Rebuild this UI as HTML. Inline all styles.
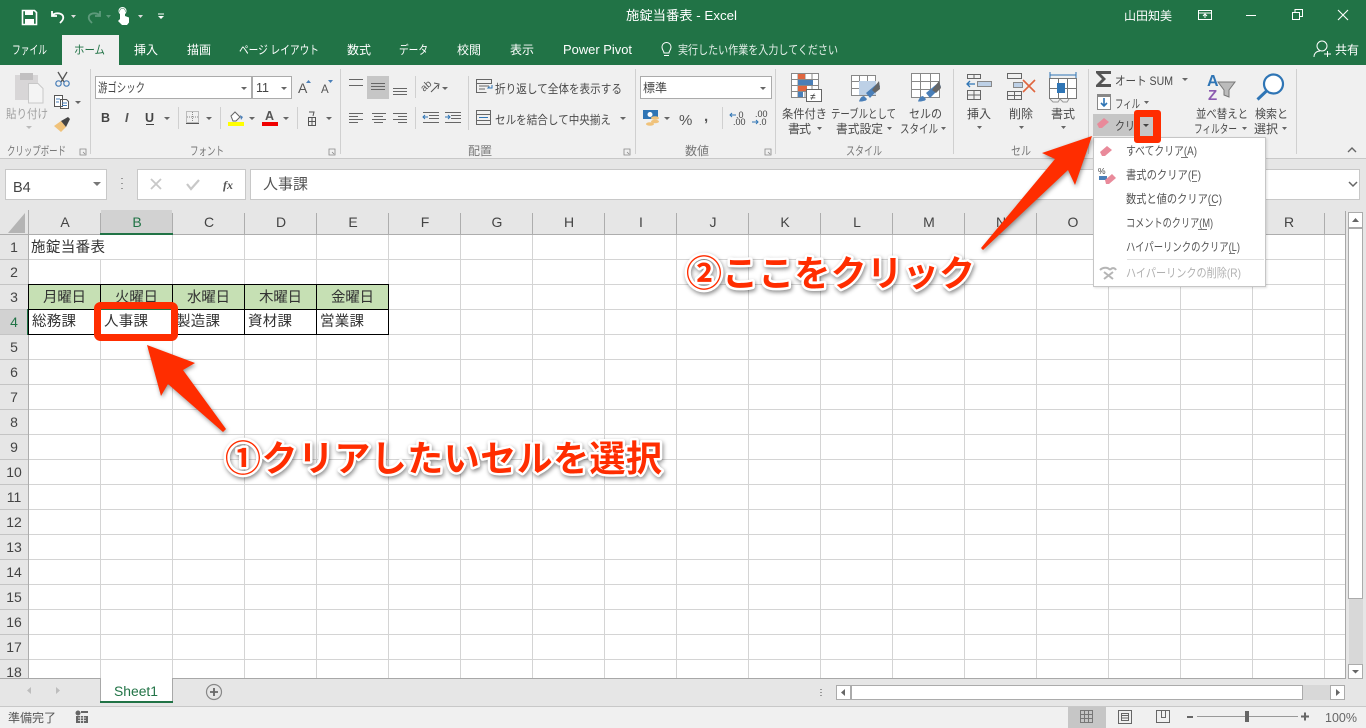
<!DOCTYPE html>
<html lang="ja"><head><meta charset="utf-8"><title>施錠当番表 - Excel</title>
<style>
html,body{margin:0;padding:0;background:#fff;overflow:hidden;width:1366px;height:728px}
svg{display:block}
text{font-family:"Liberation Sans","Noto Sans CJK JP",sans-serif;fill:#4a4a4a;font-size:12px}
.g{fill:#777;font-size:12px}
.h{font-size:14px;fill:#444;text-anchor:middle}
.c{font-size:14.5px;fill:#333}
.m{font-size:12px;fill:#555}
.t{font-size:12px;fill:#fff}
.a{font-weight:700;font-size:36px;fill:#ff2d00;stroke:#fff;stroke-width:5px;paint-order:stroke;stroke-linejoin:round;filter:drop-shadow(1px 2px 2px rgba(0,0,0,.45))}
.ar{fill:#ff2d00;filter:drop-shadow(1px 2px 2px rgba(0,0,0,.4))}
.tri{fill:#666}
</style></head><body>
<svg width="1366" height="728" viewBox="0 0 1366 728" xmlns="http://www.w3.org/2000/svg">
<defs>
<pattern id="grid" x="29" y="235" width="72" height="25" patternUnits="userSpaceOnUse">
<rect x="71" width="1" height="25" fill="#d4d4d4"/><rect y="24" width="72" height="1" fill="#d4d4d4"/>
</pattern>
<pattern id="hd" x="29" y="210" width="72" height="25" patternUnits="userSpaceOnUse">
<rect x="71" y="3" width="1" height="22" fill="#adadad"/>
</pattern>
<pattern id="rh" x="0" y="235" width="28" height="25" patternUnits="userSpaceOnUse">
<rect y="24" width="28" height="1" fill="#c4c4c4"/>
</pattern>
</defs>

<!-- title bar -->
<rect width="1366" height="65" fill="#217346"/>
<path d="M22.500 10.500h12l2 2v12h-14z" fill="none" stroke="#fff" stroke-width="1.600"/><rect x="25" y="10" width="8" height="5" fill="#fff"/><rect x="25" y="19" width="9" height="5" fill="#fff"/>
<path d="M52 11v5h5M52 15.500c3-3 9-3 11 .5 1 3-1 5-3 7" fill="none" stroke="#fff" stroke-width="1.800"/>
<path d="M71 15l5 0-2.500 3z" fill="#ddd"/>
<path d="M100 11v5h-5M100 15.500c-3-3-9-3-11 .5-1 3 1 5 3 7" fill="none" stroke="#5d9a7b" stroke-width="1.800"/>
<path d="M106 15l5 0-2.500 3z" fill="#5d9a7b"/>
<path d="M120 19v-8a2.500 2.500 0 0 1 5 0v5l4 1.500v5l-2 2.500h-5l-4-4z" fill="#fff"/><circle cx="122.500" cy="11" r="3.500" fill="none" stroke="#fff"/>
<path d="M138 15h5l-2.500 3z" fill="#ddd"/>
<path d="M158 13.500h6v1h-6zM158 16h6l-3 3z" fill="#fff"/>
<text x="626" y="20" class="t" style="font-size:13px" textLength="111" lengthAdjust="spacingAndGlyphs">施錠当番表 - Excel</text>
<text x="1124" y="20" class="t" textLength="48">山田知美</text>
<path d="M1198.500 10.500h13v9h-13zM1198.500 13h13M1205 18v-4M1203 16l2-2 2 2" stroke="#fff" fill="none"/>
<rect x="1246" y="15" width="10" height="1" fill="#fff"/>
<path d="M1292.500 12.500h7v7h-7zM1295 12v-2.500h7.500v7H1300" fill="none" stroke="#fff"/>
<path d="M1338 10l10 10M1348 10l-10 10" stroke="#fff" fill="none" stroke-width="1.100"/>

<!-- tabs -->
<rect x="62" y="35" width="57" height="30" fill="#f0f0f0"/>
<text x="12" y="54" class="t" textLength="35" lengthAdjust="spacingAndGlyphs">ファイル</text>
<text x="74" y="54" style="fill:#217346" textLength="31" lengthAdjust="spacingAndGlyphs">ホーム</text>
<text x="134" y="54" class="t">挿入</text>
<text x="187" y="54" class="t">描画</text>
<text x="239" y="54" class="t" textLength="80" lengthAdjust="spacingAndGlyphs">ページ レイアウト</text>
<text x="347" y="54" class="t">数式</text>
<text x="399" y="54" class="t" textLength="29" lengthAdjust="spacingAndGlyphs">データ</text>
<text x="457" y="54" class="t">校閲</text>
<text x="510" y="54" class="t">表示</text>
<text x="563" y="54" class="t" style="font-size:13px" textLength="69" lengthAdjust="spacingAndGlyphs">Power Pivot</text>
<path d="M664 53c0-2-2-3-2-6a4.500 4.500 0 0 1 9 0c0 3-2 4-2 6zM664 55.500h5" fill="none" stroke="#fff"/>
<text x="678" y="54" class="t" style="fill:#e4efe9" textLength="160" lengthAdjust="spacingAndGlyphs">実行したい作業を入力してください</text>
<circle cx="1322" cy="46" r="5" fill="none" stroke="#fff"/><path d="M1314 57c0-4 3-6 6-6M1324 54h7M1327.500 51v6" fill="none" stroke="#fff"/>
<text x="1335" y="54" class="t">共有</text>

<!-- ribbon -->
<rect y="65" width="1366" height="93" fill="#f0f0f0"/>
<rect x="0" y="158" width="1366" height="1" fill="#c8c8c8"/>
<rect y="159" width="1366" height="51" fill="#e6e6e6"/>
<g fill="#d0d0d0"><rect x="90" y="69" width="1" height="85"/><rect x="340" y="69" width="1" height="85"/><rect x="635" y="69" width="1" height="85"/><rect x="775" y="69" width="1" height="85"/><rect x="953" y="69" width="1" height="85"/><rect x="1088" y="69" width="1" height="85"/><rect x="1296" y="69" width="1" height="85"/>
<rect x="178" y="107" width="1" height="22"/><rect x="220" y="107" width="1" height="22"/><rect x="297" y="107" width="1" height="22"/><rect x="415" y="76" width="1" height="22"/><rect x="415" y="107" width="1" height="22"/><rect x="468" y="76" width="1" height="54"/><rect x="722" y="107" width="1" height="22"/></g>

<!-- clipboard -->
<path d="M15 75h23v25H15z" fill="#d8d6d7"/><rect x="20" y="73" width="13" height="7" fill="#c2c0c1"/>
<path d="M28.500 83.500h9.500l5 5v14.500H28.500z" fill="#f4f4f4" stroke="#c8c8c8"/>
<text x="6" y="118" style="fill:#a0a0a0" textLength="42" lengthAdjust="spacingAndGlyphs">貼り付け</text>
<path d="M26 126h6l-3 3z" fill="#bbb"/>
<path d="M58 72l6 10M67 72l-6 10" stroke="#555" fill="none" stroke-width="1.300"/><circle cx="58.500" cy="83.500" r="2.700" fill="none" stroke="#4a7fb8" stroke-width="1.200"/><circle cx="66.500" cy="83.500" r="2.700" fill="none" stroke="#4a7fb8" stroke-width="1.200"/>
<path d="M54.500 95.500h8v11h-8zM60.500 99.500h6l2 2v7h-8z" fill="#fff" stroke="#555"/><path d="M56 99h4M56 102h3M62 103h5M62 105.500h5" stroke="#4a7fb8"/>
<path d="M75 101h6l-3 3z" class="tri"/>
<path d="M54 126l7-5 5 6-5 5z" fill="#f0c27a"/><path d="M61 121l7-4 2 2-4 8z" fill="#444"/>
<text x="7" y="155" class="g" textLength="59" lengthAdjust="spacingAndGlyphs">クリップボード</text>
<path d="M80 149h6v6h-6zM83 152l2 2" fill="none" stroke="#888" stroke-width=".8"/>

<!-- font group -->
<rect x="95.500" y="76.500" width="156" height="22" fill="#fff" stroke="#ababab"/>
<rect x="252.500" y="76.500" width="39" height="22" fill="#fff" stroke="#ababab"/>
<text x="98" y="92" style="font-size:12.500px;fill:#444" textLength="47" lengthAdjust="spacingAndGlyphs">游ゴシック</text>
<text x="256" y="92" style="font-size:12.500px;fill:#444">11</text>
<path d="M241 87h6l-3 3zM281 87h6l-3 3z" class="tri"/>
<text x="298" y="93" style="font-size:14px;fill:#555">A</text><path d="M306 83l2.500-3 2.500 3z" fill="#4a7fb8"/>
<text x="321" y="93" style="font-size:11.500px;fill:#555">A</text><path d="M328 80h5l-2.500 3z" fill="#4a7fb8"/>
<text x="101" y="122" style="font-size:12.500px;font-weight:700;fill:#444">B</text>
<text x="125" y="122" style="font-size:12.500px;font-style:italic;font-weight:700;fill:#555">I</text>
<text x="145" y="122" style="font-size:12.500px;font-weight:700;fill:#444">U</text><rect x="146" y="124" width="8" height="1" fill="#444"/>
<path d="M164 117h6l-3 3zM206 117h6l-3 3zM249 117h6l-3 3zM283 117h6l-3 3zM326 117h6l-3 3z" class="tri"/>
<rect x="186.500" y="111.500" width="12" height="11" fill="none" stroke="#888" stroke-dasharray="1 1"/><path d="M192.500 112v10M187 117h11" stroke="#888" stroke-dasharray="1 1"/><rect x="186" y="123" width="13" height="1" fill="#555"/>
<path d="M231 116l4-4 5 5-4 4h-3z" fill="#fff" stroke="#666"/><path d="M240 115l3 2-2 3z" fill="#4a7fb8"/><rect x="228" y="122" width="16" height="4" fill="#ffff00"/>
<text x="265" y="120" style="font-size:12.500px;font-weight:700;fill:#555">A</text><rect x="262" y="122" width="16" height="4" fill="#f00000"/>
<path d="M309 112h5l-1 4M308.500 117.500h7v8h-7zM312 117.500v8M308.500 121.500h7" fill="none" stroke="#555"/>
<text x="190" y="155" class="g" textLength="34" lengthAdjust="spacingAndGlyphs">フォント</text>
<path d="M329 149h6v6h-6zM332 152l2 2" fill="none" stroke="#888" stroke-width=".8"/>

<!-- alignment -->
<rect x="367" y="76" width="22" height="23" fill="#c6c6c6"/>
<path d="M349 79.500h14M349 85.500h14M371 83.500h14M371 86.500h14M371 89.500h14M393 88.500h14M393 91.500h14M393 94.500h14M349 113.500h14M349 116.500h9M349 119.500h14M349 122.500h9M372 113.500h14M374 116.500h9M372 119.500h14M374 122.500h9M393 113.500h14M398 116.500h9M393 119.500h14M398 122.500h9" stroke="#666" fill="none"/>
<text x="424" y="92" transform="rotate(-42 424 92)" style="font-size:10px;fill:#555">ab</text><path d="M431 92l7-7M434 83l5 1-1 5" stroke="#555" fill="none"/><path d="M442 87h6l-3 3z" class="tri"/>
<path d="M423 112.500h16M429 115.500h10M429 118.500h10M423 122.500h16M445 112.500h16M451 115.500h10M451 118.500h10M445 122.500h16" stroke="#666"/>
<path d="M423 117h5M425 115l-2 2 2 2" stroke="#2f75b5" fill="none"/><path d="M445 117h5M448 115l2 2-2 2" stroke="#2f75b5" fill="none"/>
<path d="M476.500 79.500h15v4h-15zM476.500 83.500v9h10M479 86h10M479 89h6" stroke="#666" fill="none"/><path d="M492 85v3h-4l1.500-1.500" stroke="#2f75b5" fill="none"/>
<text x="495" y="93" textLength="127" lengthAdjust="spacingAndGlyphs">折り返して全体を表示する</text>
<path d="M476.500 110.500h14v14h-14zM476.500 114.500h14M476.500 120.500h14" stroke="#666" fill="none"/><path d="M479 117.500h9" stroke="#2f75b5"/>
<text x="495" y="124" textLength="116" lengthAdjust="spacingAndGlyphs">セルを結合して中央揃え</text>
<path d="M620 117h6l-3 3z" class="tri"/>
<text x="468" y="155" class="g" textLength="24">配置</text>
<path d="M624 149h6v6h-6zM627 152l2 2" fill="none" stroke="#888" stroke-width=".8"/>

<!-- number -->
<rect x="640.500" y="76.500" width="131" height="22" fill="#fff" stroke="#ababab"/>
<text x="643" y="92" style="fill:#444">標準</text>
<path d="M760 87h6l-3 3z" class="tri"/>
<rect x="643" y="110" width="15" height="9" fill="#2f75b5"/><circle cx="650" cy="114.500" r="2.500" fill="#fff"/><ellipse cx="655" cy="118" rx="4" ry="1.800" fill="#f0c27a"/><ellipse cx="655" cy="121.500" rx="4" ry="1.800" fill="#f0c27a"/><ellipse cx="650" cy="124" rx="4" ry="1.800" fill="#f0c27a"/>
<path d="M664 117h6l-3 3z" class="tri"/>
<text x="679" y="125" style="font-size:15px;fill:#555">%</text>
<text x="704" y="121" style="font-size:15px;font-weight:700;fill:#555">,</text>
<text x="736" y="118" style="font-size:9px;fill:#444">.0</text><text x="733" y="125" style="font-size:9px;fill:#444">.00</text><path d="M730 115h6M732 113l-2 2 2 2" stroke="#2f75b5" fill="none"/>
<text x="755" y="117" style="font-size:9px;fill:#444">.00</text><text x="759" y="125" style="font-size:9px;fill:#444">.0</text><path d="M752 122h6M756 120l2 2-2 2" stroke="#2f75b5" fill="none"/>
<text x="685" y="155" class="g" textLength="24">数値</text>
<path d="M765 149h6v6h-6zM768 152l2 2" fill="none" stroke="#888" stroke-width=".8"/>

<!-- styles -->
<path d="M791.500 73.500h27v24h-27zM791.500 79.500h27M791.500 85.500h27M791.500 91.500h27M798 73.500v24M805 73.500v24M812 73.500v24" stroke="#888" fill="#fff"/>
<rect x="798" y="74" width="7" height="5" fill="#e0663f"/><rect x="798" y="80" width="15" height="5" fill="#4a7fb8"/><rect x="798" y="86" width="9" height="5" fill="#e0663f"/><rect x="798" y="92" width="5" height="5" fill="#4a7fb8"/>
<rect x="806.500" y="89.500" width="15" height="12" fill="#fff" stroke="#666"/><text x="810" y="100" style="font-size:10px;fill:#333">≠</text>
<text x="782" y="118" textLength="45" lengthAdjust="spacingAndGlyphs">条件付き</text>
<text x="788" y="133" textLength="23">書式</text><path d="M817 127h5l-2.500 3z" class="tri"/>
<path d="M851.500 75.500h24v20h-24zM851.500 81.500h24M851.500 88.500h24M859.500 75.500v20M867.500 75.500v20" stroke="#888" fill="#fff"/><rect x="859" y="81" width="17" height="14" fill="#bdd0e6"/>
<path d="M864 96l3 3-1 1.500-4 1h-3c1-3 2-5 5-5.500zM866 93l13-11 1 5-10 11z" fill="#4a7fb8"/><path d="M872 90l7-9 1 8-5 4z" fill="#666"/>
<text x="831" y="118" textLength="65" lengthAdjust="spacingAndGlyphs">テーブルとして</text>
<text x="836" y="133" textLength="47" lengthAdjust="spacingAndGlyphs">書式設定</text><path d="M887 127h5l-2.500 3z" class="tri"/>
<path d="M911.500 73.500h28v24h-28zM911.500 81.500h28M911.500 89.500h28M920.500 73.500v24M930.500 73.500v24" stroke="#888" fill="#fff"/>
<path d="M923 96l3 3-1 1.500-4 1h-3c1-3 2-5 5-5.500zM926 93l13-11 2 5-11 11z" fill="#4a7fb8"/><path d="M932 90l7-9 2 7-5 5z" fill="#666"/>
<text x="909" y="118" textLength="33" lengthAdjust="spacingAndGlyphs">セルの</text>
<text x="900" y="133" textLength="38" lengthAdjust="spacingAndGlyphs">スタイル</text><path d="M941 127h5l-2.500 3z" class="tri"/>
<text x="846" y="155" class="g" textLength="36" lengthAdjust="spacingAndGlyphs">スタイル</text>

<!-- cells -->
<path d="M967.500 74.500h13v4h-13zM967.500 90.500h13v9h-13zM974 90.500v9M967.500 95h13M974 74.500v4" stroke="#666" fill="none"/><rect x="977.500" y="81.500" width="14" height="5" fill="#bdd0e6" stroke="#888"/><path d="M967 84h8M970 81l-3 3 3 3" stroke="#2f75b5" fill="none" stroke-width="1.300"/>
<text x="967" y="118" textLength="24">挿入</text><path d="M977 126h5l-2.500 3z" class="tri"/>
<path d="M1007.500 73.500h14v5h-14zM1007.500 91.500h14v8h-14zM1014.500 91.500v8M1007.500 95.500h14" stroke="#666" fill="none"/><rect x="1013.500" y="82.500" width="9" height="5" fill="#bdd0e6" stroke="#888"/><path d="M1023 80l12 12M1035 80l-12 12" stroke="#e0663f" stroke-width="1.600"/>
<text x="1009" y="118" textLength="24">削除</text><path d="M1019 126h5l-2.500 3z" class="tri"/>
<path d="M1050 75h26M1050 72v6M1076 72v6" stroke="#2f75b5" fill="none"/>
<path d="M1049.500 78.500h27v20h-27zM1058.500 78.500v20M1067.500 78.500v20M1049.500 88.500h27" stroke="#777" fill="#fff"/><rect x="1057" y="83" width="8" height="10" fill="#2f75b5"/><path d="M1050 99l3 3h5l2-3M1060 99l3 3h4l2-3" stroke="#999" fill="none"/>
<text x="1051" y="118" textLength="24">書式</text><path d="M1061 126h5l-2.500 3z" class="tri"/>
<text x="1011" y="155" class="g" textLength="20" lengthAdjust="spacingAndGlyphs">セル</text>

<!-- editing -->
<path d="M1096 71h15v3h-10l5 5-5 5h10v3h-15v-2l6-6-6-6z" fill="#555"/>
<text x="1115" y="85" textLength="58" lengthAdjust="spacingAndGlyphs">オート SUM</text><path d="M1182 78h6l-3 3z" class="tri"/>
<rect x="1097.500" y="94.500" width="13" height="15" fill="#fff" stroke="#888"/><rect x="1097" y="94" width="14" height="3" fill="#888"/><path d="M1104 98v8M1101 103l3 3 3-3" stroke="#2f75b5" fill="none" stroke-width="1.600"/>
<text x="1115" y="108" textLength="25" lengthAdjust="spacingAndGlyphs">フィル</text><path d="M1144 101h5l-2.500 3z" class="tri"/>
<text x="1207" y="86" style="font-size:16px;font-weight:700;fill:#2f75b5">A</text><text x="1208" y="100" style="font-size:15px;font-weight:700;fill:#8c5bb0">Z</text>
<path d="M1218 82h17l-6 8v7l-5-2v-5z" fill="#bbb" stroke="#777"/>
<circle cx="1273.500" cy="84" r="9.500" fill="#fff" stroke="#2f75b5" stroke-width="2.200"/><path d="M1266.500 91l-9 8.500" stroke="#2f75b5" stroke-width="3"/>
<text x="1196" y="118" textLength="52" lengthAdjust="spacingAndGlyphs">並べ替えと</text>
<text x="1194" y="133" textLength="43" lengthAdjust="spacingAndGlyphs">フィルター</text><path d="M1242 127h5l-2.500 3z" class="tri"/>
<text x="1255" y="118" textLength="33" lengthAdjust="spacingAndGlyphs">検索と</text>
<text x="1254" y="133" textLength="24">選択</text><path d="M1282 127h5l-2.500 3z" class="tri"/>
<path d="M1348 152l4-4 4 4" fill="none" stroke="#666" stroke-width="1.400"/>

<!-- formula bar -->
<rect x="5.500" y="169.500" width="101" height="30" fill="#fff" stroke="#c8c8c8"/>
<text x="13" y="192" style="font-size:14.500px;fill:#444">B4</text>
<path d="M93 182h8l-4 4z" fill="#777"/>
<path d="M122 178v1M122 183v1M122 188v1" stroke="#999" stroke-width="2"/>
<rect x="137.500" y="169.500" width="108" height="30" fill="#fff" stroke="#c8c8c8"/>
<rect x="250.500" y="169.500" width="1109" height="30" fill="#fff" stroke="#c8c8c8"/>
<path d="M151 179l10 10M161 179l-10 10" stroke="#c8c8c8" stroke-width="1.800"/>
<path d="M187 184l4 5 8-9" stroke="#c8c8c8" stroke-width="2.200" fill="none"/>
<text x="223" y="189" style="font-size:12px;font-weight:700;font-style:italic;fill:#555;font-family:'Liberation Serif',serif">fx</text>
<text x="263" y="189" style="font-size:15px;fill:#555" textLength="45">人事課</text>
<path d="M1349 182l4 4 4-4" fill="none" stroke="#666" stroke-width="1.500"/>

<!-- sheet area -->
<rect x="0" y="210" width="1366" height="497" fill="#e6e6e6"/>
<rect x="29" y="235" width="1316" height="443" fill="#fff"/>
<rect x="29" y="235" width="1316" height="443" fill="url(#grid)"/>
<rect x="29" y="210" width="1316" height="25" fill="url(#hd)"/>
<rect x="0" y="235" width="28" height="443" fill="url(#rh)"/>
<rect x="28" y="210" width="1" height="468" fill="#adadad"/>
<rect x="0" y="234" width="1345" height="1" fill="#adadad"/>
<rect x="1345" y="211" width="1" height="468" fill="#a8a8a8"/>
<rect x="0" y="678" width="1346" height="1" fill="#a8a8a8"/>
<path d="M25 213v20H8z" fill="#b4b4b4"/>
<rect x="101" y="210" width="71" height="23" fill="#d2d2d2"/><rect x="100" y="233" width="73" height="2" fill="#217346"/>
<rect x="0" y="310" width="27" height="24" fill="#d2d2d2"/><rect x="27" y="309" width="2" height="26" fill="#217346"/>
<text x="65" y="227" class="h">A</text><text x="137" y="227" class="h" style="fill:#217346">B</text><text x="209" y="227" class="h">C</text><text x="281" y="227" class="h">D</text><text x="353" y="227" class="h">E</text><text x="425" y="227" class="h">F</text><text x="497" y="227" class="h">G</text><text x="569" y="227" class="h">H</text><text x="641" y="227" class="h">I</text><text x="713" y="227" class="h">J</text><text x="785" y="227" class="h">K</text><text x="857" y="227" class="h">L</text><text x="929" y="227" class="h">M</text><text x="1001" y="227" class="h">N</text><text x="1073" y="227" class="h">O</text><text x="1145" y="227" class="h">P</text><text x="1217" y="227" class="h">Q</text><text x="1289" y="227" class="h">R</text>
<text x="14" y="252" class="h">1</text><text x="14" y="277" class="h">2</text><text x="14" y="302" class="h">3</text><text x="14" y="327" class="h" style="fill:#217346">4</text><text x="14" y="352" class="h">5</text><text x="14" y="377" class="h">6</text><text x="14" y="402" class="h">7</text><text x="14" y="427" class="h">8</text><text x="14" y="452" class="h">9</text><text x="14" y="477" class="h">10</text><text x="14" y="502" class="h">11</text><text x="14" y="527" class="h">12</text><text x="14" y="552" class="h">13</text><text x="14" y="577" class="h">14</text><text x="14" y="602" class="h">15</text><text x="14" y="627" class="h">16</text><text x="14" y="652" class="h">17</text><text x="14" y="677" class="h">18</text>

<!-- cells content -->
<rect x="100" y="235" width="1" height="24" fill="#fff"/>
<text x="31" y="252" class="c" textLength="74">施錠当番表</text>
<rect x="29" y="285" width="360" height="24" fill="#c6e0b4"/>
<path d="M28.500 284.500h360v50h-360zM28.500 309.500h360M100.500 284.500v50M172.500 284.500v50M244.500 284.500v50M316.500 284.500v50" fill="none" stroke="#000"/>
<text x="43" y="302" class="c" textLength="43">月曜日</text><text x="115" y="302" class="c" textLength="43">火曜日</text><text x="187" y="302" class="c" textLength="43">水曜日</text><text x="259" y="302" class="c" textLength="43">木曜日</text><text x="331" y="302" class="c" textLength="43">金曜日</text>
<text x="32" y="326" class="c" textLength="44">総務課</text><text x="104" y="326" class="c" textLength="44">人事課</text><text x="176" y="326" class="c" textLength="44">製造課</text><text x="248" y="326" class="c" textLength="44">資材課</text><text x="320" y="326" class="c" textLength="44">営業課</text>
<rect x="100" y="309" width="73" height="26" fill="none" stroke="#217346" stroke-width="2"/>

<!-- scrollbars -->
<rect x="1348.500" y="212.500" width="14" height="15" fill="#fff" stroke="#ababab"/><path d="M1352 222l3.500-4 3.500 4z" fill="#666"/>
<rect x="1348.500" y="228.500" width="14" height="370" fill="#fff" stroke="#ababab"/>
<rect x="1349" y="599" width="14" height="65" fill="#d8d8d8"/>
<rect x="1348.500" y="664.500" width="14" height="14" fill="#fff" stroke="#ababab"/><path d="M1352 670h7l-3.500 3.500z" fill="#666"/>
<rect x="836.500" y="685.500" width="14" height="14" fill="#fff" stroke="#ababab"/><path d="M845 689v7l-4-3.500z" fill="#666"/>
<rect x="851.500" y="685.500" width="451" height="14" fill="#fff" stroke="#ababab"/>
<rect x="1303" y="685" width="28" height="15" fill="#d8d8d8"/>
<rect x="1330.500" y="685.500" width="14" height="14" fill="#fff" stroke="#ababab"/><path d="M1336 689v7l4-3.500z" fill="#666"/>
<path d="M821 689v1M821 692v1M821 695v1" stroke="#999" stroke-width="2"/>

<!-- sheet tabs -->
<rect x="100" y="678" width="73" height="25" fill="#fff"/>
<path d="M100.500 678v25M172.500 678v25" stroke="#a8a8a8"/>
<rect x="100" y="701" width="73" height="2" fill="#217346"/>
<text x="114" y="696" style="font-size:13.500px;fill:#217346" textLength="44" lengthAdjust="spacingAndGlyphs">Sheet1</text>
<path d="M31 687v7l-4-3.500zM56 687v7l4-3.500z" fill="#bdbdbd"/>
<circle cx="214" cy="692" r="7.500" fill="none" stroke="#888" stroke-width="1.200"/><path d="M214 688v8M210 692h8" stroke="#666" stroke-width="1.800"/>

<!-- status bar -->
<rect y="706" width="1366" height="22" fill="#f0f0f0"/><rect y="706" width="1366" height="1" fill="#c8c8c8"/>
<text x="8" y="722" style="fill:#555" textLength="48">準備完了</text>
<circle cx="78" cy="713" r="2.500" fill="#666"/><path d="M81 711h7v2h-7zM76 716h12v7H76z" fill="#666"/><path d="M78 718h8M78 720.500h8M80.500 716v7M83.500 716v7" stroke="#f0f0f0" stroke-width=".8"/>
<rect x="1068" y="707" width="38" height="21" fill="#c6c6c6"/>
<path d="M1080.500 710.500h12v12h-12zM1084.500 710.500v12M1088.500 710.500v12M1080.500 714.500h12M1080.500 718.500h12" stroke="#777" fill="none"/>
<path d="M1118.500 710.500h13v13h-13zM1121.500 713.500h7v7h-7zM1122 715.500h6M1122 718h6" stroke="#666" fill="none"/>
<path d="M1156.500 710.500h13v12h-13zM1161.500 710.500v7h4v-7" stroke="#666" fill="none"/>
<rect x="1187" y="716" width="6" height="2" fill="#666"/>
<rect x="1197" y="716" width="101" height="1" fill="#999"/>
<rect x="1245" y="711" width="4" height="11" fill="#666"/>
<path d="M1301 716.500h8M1305 712.500v8" stroke="#666" stroke-width="2"/>
<text x="1325" y="722" style="font-size:12.500px;fill:#666">100%</text>

<!-- clear button -->
<rect x="1093" y="114" width="60" height="22" fill="#c6c6c6"/>
<path d="M1097 124l7-6 5 4-7 6h-3z" fill="#e98a9a"/>
<text x="1115" y="130" style="fill:#444" textLength="30" lengthAdjust="spacingAndGlyphs">クリア</text>

<!-- dropdown -->
<rect x="1093.500" y="137.500" width="172" height="149" fill="#fff" stroke="#c6c6c6" style="filter:drop-shadow(1px 1px 1px rgba(0,0,0,.12))"/>
<path d="M1100 152l7-6 5 4-7 6h-3z" fill="#e98a9a"/>
<text x="1098" y="174" style="font-size:8.500px;fill:#444">%</text><rect x="1099" y="176" width="8" height="4" fill="#4a7fb8"/><path d="M1105 180l7-6 4 4-7 6h-3z" fill="#e98a9a"/>
<text x="1126" y="155" class="m" textLength="71" lengthAdjust="spacingAndGlyphs">すべてクリア(A)</text><rect x="1181" y="157" width="7" height="1" fill="#777"/>
<text x="1126" y="179" class="m" textLength="75" lengthAdjust="spacingAndGlyphs">書式のクリア(F)</text><rect x="1192" y="181" width="5" height="1" fill="#777"/>
<text x="1126" y="203" class="m" textLength="96" lengthAdjust="spacingAndGlyphs">数式と値のクリア(C)</text><rect x="1209" y="205" width="7" height="1" fill="#777"/>
<text x="1126" y="227" class="m" textLength="87" lengthAdjust="spacingAndGlyphs">コメントのクリア(M)</text><rect x="1198" y="229" width="9" height="1" fill="#777"/>
<text x="1126" y="251" class="m" textLength="114" lengthAdjust="spacingAndGlyphs">ハイパーリンクのクリア(L)</text><rect x="1229" y="253" width="6" height="1" fill="#777"/>
<rect x="1127" y="259" width="137" height="1" fill="#e0e0e0"/>
<path d="M1100 270c3-3 8-3 10 0M1110 270c2-3 5-2 6 0M1104 272l9 7M1113 272l-9 7" stroke="#b5b5b5" stroke-width="2" fill="none"/>
<text x="1126" y="277" class="m" style="fill:#b0b0b0" textLength="115" lengthAdjust="spacingAndGlyphs">ハイパーリンクの削除(R)</text>

<!-- annotations -->
<rect x="97.500" y="305.500" width="77" height="32" rx="3" fill="none" stroke="#ff2d00" stroke-width="7"/>
<path fill-rule="evenodd" d="M1137 110h21a3 3 0 0 1 3 3v27a3 3 0 0 1-3 3h-21a3 3 0 0 1-3-3v-27a3 3 0 0 1 3-3zM1140 117v19h13v-19z" fill="#ff2d00"/>
<rect x="1140" y="117" width="13" height="19" fill="#c6c6c6"/><path d="M1143 124h6l-3 3z" fill="#444"/>
<polygon class="ar" points="147,345 195,363 183,370 226,429 223,432 168,384 161,396"/>
<polygon class="ar" points="1092,136 1075,185 1068,170 983,250 981,248 1055,159 1042,153"/>
<text x="225" y="471" class="a" textLength="437">①クリアしたいセルを選択</text>
<text x="686" y="286" class="a" textLength="289">②ここをクリック</text>
</svg>
</body></html>
